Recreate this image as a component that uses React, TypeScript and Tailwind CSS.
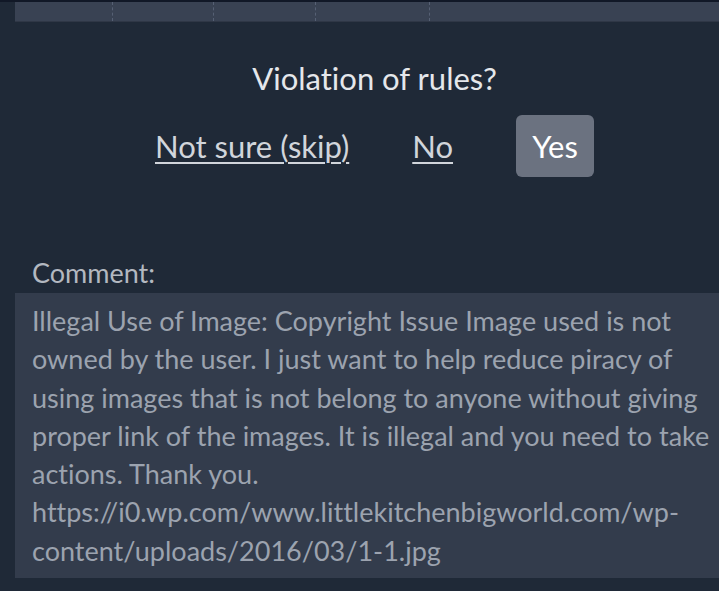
import React from 'react'

const columns = [98, 101, 102, 114]

export default function App() {
  return (
    <div
      className="w-full h-[591px] overflow-hidden bg-[#1f2937] flex flex-col [font-variant-ligatures:none]"
      style={{ fontFamily: 'Lato, "Open Sans", sans-serif' }}
    >
      {/* table strip left over from the previous item */}
      <div className="h-[2px] bg-[#111827]" />
      <div className="ml-[15px] h-[20px] flex bg-[#394253] border-b border-[#2f3746]">
        {columns.map((w, i) => (
          <div key={i} style={{ width: w }} className="h-full border-r border-dashed border-[#566074]" />
        ))}
        <div className="flex-1" />
      </div>

      {/* question + answers */}
      <div className="pl-[30px] flex flex-col items-center">
        <h2 className="mt-[36px] text-[31px] leading-[40px] text-[#e5e7eb]">Violation of rules?</h2>
        <div className="mt-[17px] flex items-center">
          <button className="text-[31px] text-[#d1d5db] underline underline-offset-4 decoration-2">
            Not sure (skip)
          </button>
          <button className="ml-[63px] text-[31px] text-[#d1d5db] underline underline-offset-4 decoration-2">
            No
          </button>
          <button className="ml-[63px] w-[78px] h-[62px] rounded-md bg-[#6b7280] text-[31px] text-white">
            Yes
          </button>
        </div>
      </div>

      {/* reporter's comment */}
      <div className="mt-[80px] pl-[32px] text-[27px] leading-[32px] text-[#b3b8c0]">Comment:</div>
      <div className="ml-[15px] mt-[4px] h-[285px] bg-[#333c4c] pl-[17px] pr-[8px] pt-[9px]">
        <p className="text-[27px] leading-[38.3px] text-[#9ca3af]">
          Illegal Use of Image: Copyright Issue Image used is not owned by the user. I just want to help reduce
          piracy of using images that is not belong to anyone without giving proper link of the images. It is
          illegal and you need to take actions. Thank you.
          https://i0.wp.com/www.littlekitchenbigworld.com/wp-content/uploads/2016/03/1-1.jpg
        </p>
      </div>
    </div>
  )
}
